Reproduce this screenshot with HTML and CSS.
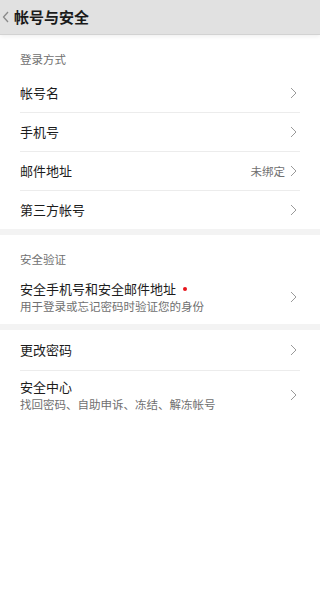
FILE: index.html
```html
<!DOCTYPE html>
<html lang="zh-CN">
<head>
    <meta charset="UTF-8">
    <meta name="viewport" content="width=device-width, initial-scale=1.0">
    <title>帐号与安全</title>
    <link rel="stylesheet" href="styles.css">
</head>
<body>
    <div class="topbar">
        <svg class="back" width="7" height="12" viewBox="0 0 7 12"><polyline points="6,1 1.5,6 6,11" fill="none" stroke="#8a8a8a" stroke-width="1.3"/></svg>
        <span class="topbar-title">帐号与安全</span>
    </div>

    <div class="group">
        <div class="group-title">登录方式</div>
        <div class="row">
            <span class="row-label">帐号名</span>
            <svg class="arrow" width="7" height="12" viewBox="0 0 7 12"><polyline points="1,1 6,6 1,11" fill="none" stroke="#9a9a9a" stroke-width="1"/></svg>
        </div>
        <div class="row">
            <span class="row-label">手机号</span>
            <svg class="arrow" width="7" height="12" viewBox="0 0 7 12"><polyline points="1,1 6,6 1,11" fill="none" stroke="#9a9a9a" stroke-width="1"/></svg>
        </div>
        <div class="row">
            <span class="row-label">邮件地址</span>
            <span class="row-value">未绑定</span>
            <svg class="arrow" width="7" height="12" viewBox="0 0 7 12"><polyline points="1,1 6,6 1,11" fill="none" stroke="#9a9a9a" stroke-width="1"/></svg>
        </div>
        <div class="row">
            <span class="row-label">第三方帐号</span>
            <svg class="arrow" width="7" height="12" viewBox="0 0 7 12"><polyline points="1,1 6,6 1,11" fill="none" stroke="#9a9a9a" stroke-width="1"/></svg>
        </div>
    </div>

    <div class="group">
        <div class="group-title">安全验证</div>
        <div class="row row-tall">
            <div class="row-text">
                <div class="row-label">安全手机号和安全邮件地址<span class="dot"></span></div>
                <div class="row-sub">用于登录或忘记密码时验证您的身份</div>
            </div>
            <svg class="arrow" width="7" height="12" viewBox="0 0 7 12"><polyline points="1,1 6,6 1,11" fill="none" stroke="#9a9a9a" stroke-width="1"/></svg>
        </div>
    </div>

    <div class="group">
        <div class="row row-pwd">
            <span class="row-label">更改密码</span>
            <svg class="arrow" width="7" height="12" viewBox="0 0 7 12"><polyline points="1,1 6,6 1,11" fill="none" stroke="#9a9a9a" stroke-width="1"/></svg>
        </div>
        <div class="row row-tall row-center">
            <div class="row-text">
                <div class="row-label">安全中心</div>
                <div class="row-sub">找回密码、自助申诉、冻结、解冻帐号</div>
            </div>
            <svg class="arrow" width="7" height="12" viewBox="0 0 7 12"><polyline points="1,1 6,6 1,11" fill="none" stroke="#9a9a9a" stroke-width="1"/></svg>
        </div>
    </div>
</body>
</html>
```

FILE: styles.css
```css
:root {
    --text-color: #1c1c1c;
    --sub-color: #707070;
    --line-color: #ececec;
    --gap-color: #f3f3f3;
}

body {
    margin: 0;
    background: #ffffff;
    font-family: "Noto Sans CJK SC", "Noto Sans", sans-serif;
    color: var(--text-color);
}

.topbar {
    height: 34px;
    background: #e1e1e1;
    border-bottom: 1px solid #d2d2d2;
    box-shadow: 0 2px 4px rgba(0, 0, 0, 0.06);
    display: flex;
    align-items: center;
    padding-left: 2px;
    position: relative;
}

.back {
    margin-right: 5px;
}

.topbar-title {
    font-size: 15px;
    font-weight: bold;
    color: #1a1a1a;
    line-height: 18px;
}

.group {
    padding: 0 20px;
    border-bottom: 6px solid var(--gap-color);
}

.group:last-child {
    border-bottom: none;
}

.group-title {
    font-size: 11.5px;
    color: var(--sub-color);
    line-height: 18px;
    padding: 15px 0 6px;
}

.row {
    height: 38px;
    display: flex;
    align-items: center;
    border-bottom: 1px solid var(--line-color);
}

.row:last-child {
    border-bottom: none;
}

.row-label {
    font-size: 13px;
    line-height: 18px;
    flex: 1;
    display: flex;
    align-items: center;
}

.row-value {
    font-size: 11.5px;
    color: var(--sub-color);
    margin-right: 5px;
}

.arrow {
    margin-right: 3px;
}

.row-tall {
    height: auto;
    padding: 6px 0 10px;
}

.row-pwd {
    height: 40px;
}

.row-center {
    padding-top: 7px;
}

.row-text {
    flex: 1;
}

.row-sub {
    font-size: 11.5px;
    color: var(--sub-color);
    line-height: 16px;
}

.dot {
    width: 4px;
    height: 4px;
    border-radius: 50%;
    background: #e8141b;
    margin-left: 7px;
}
```
